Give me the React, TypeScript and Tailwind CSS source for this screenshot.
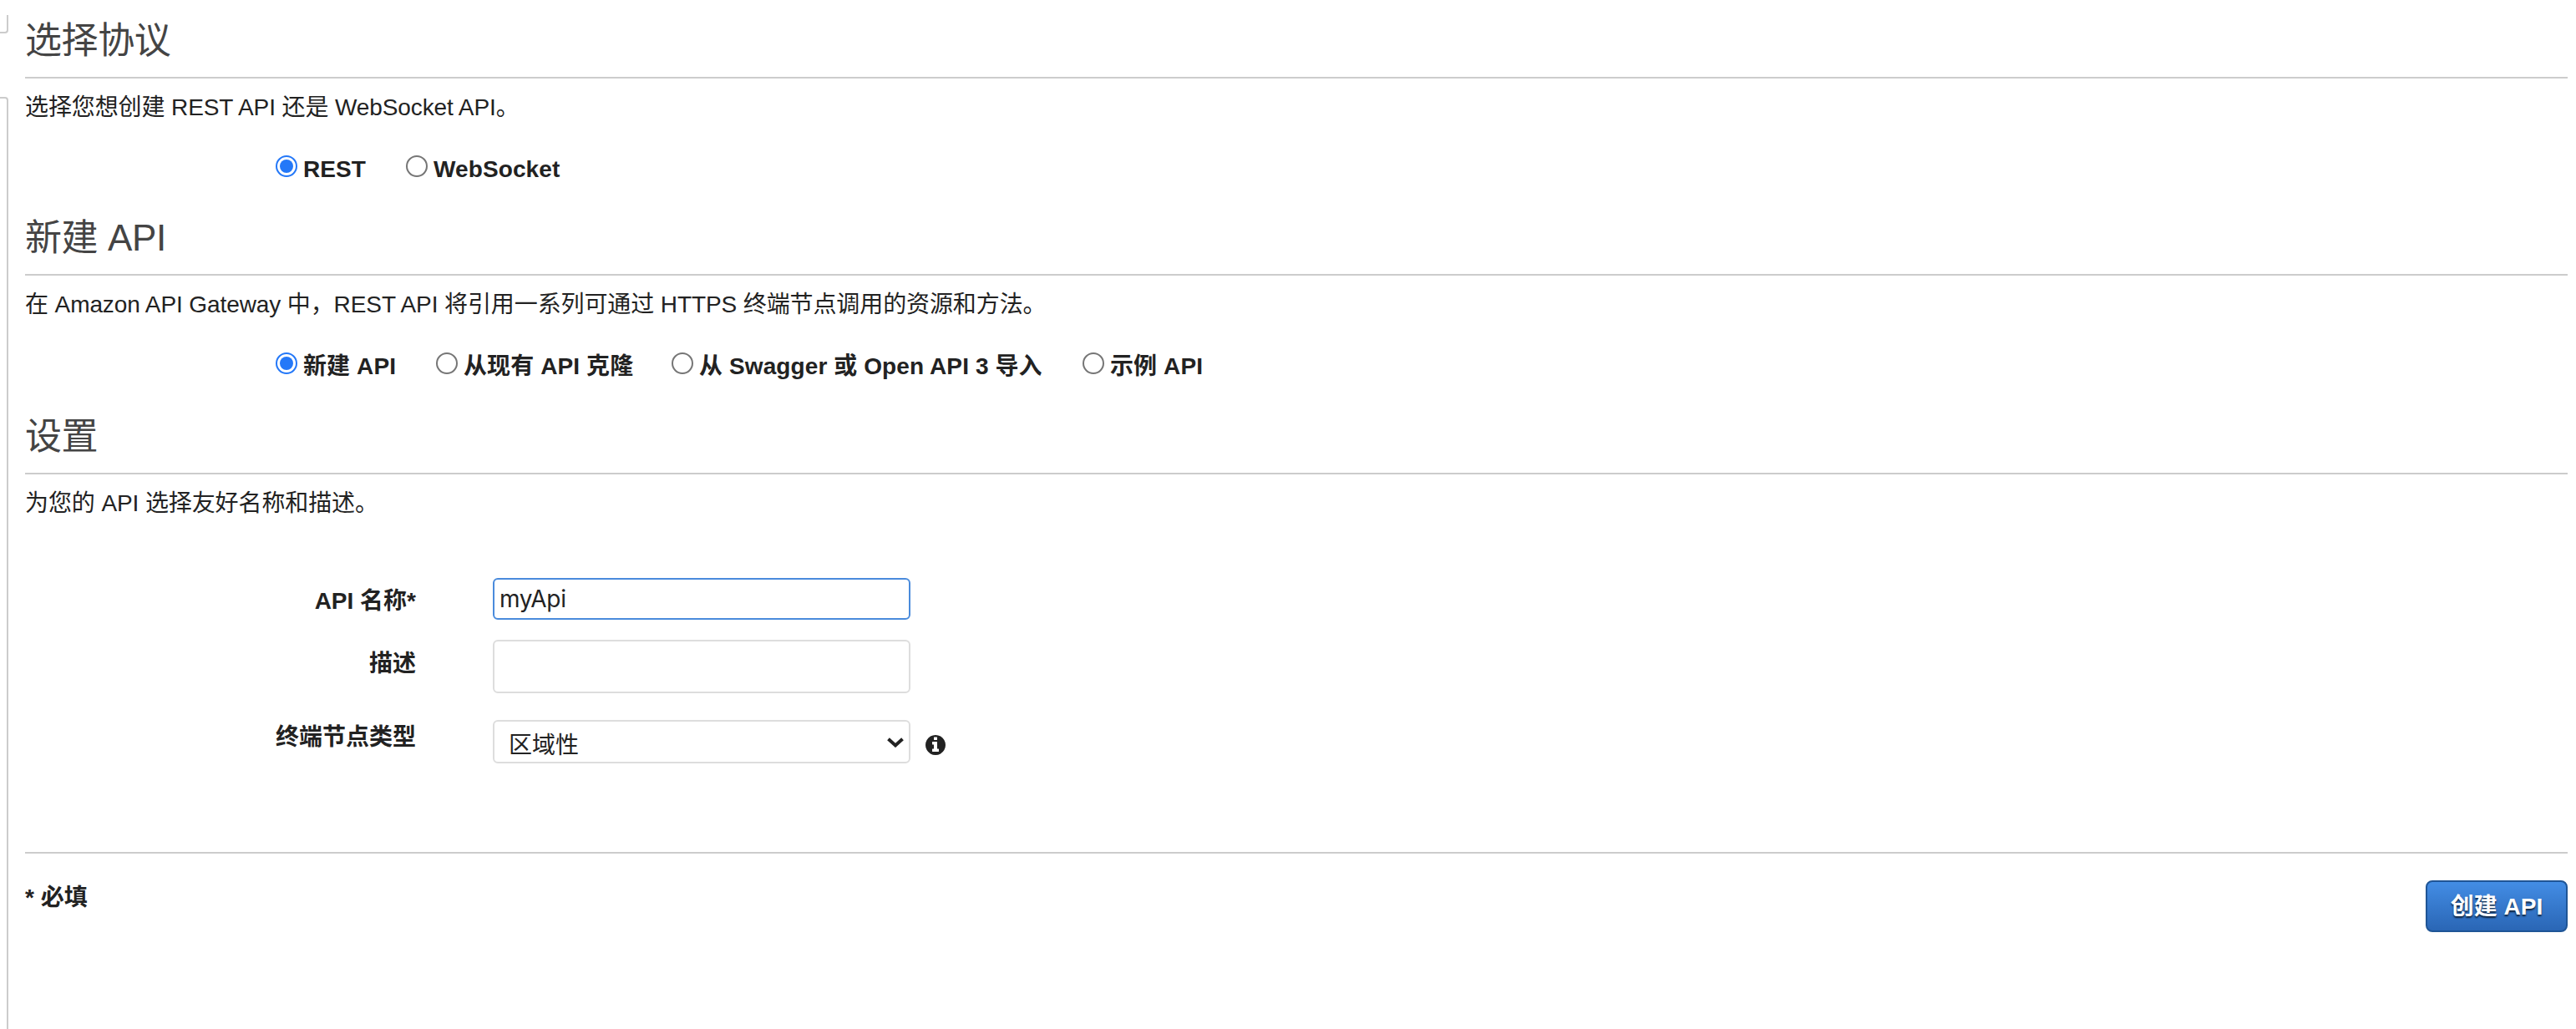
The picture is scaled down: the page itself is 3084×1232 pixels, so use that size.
import { useState } from "react";
import type { ReactNode } from "react";

type RadioProps = { label: string; checked: boolean; width: string; onSelect: () => void };

function Radio({ label, checked, width, onSelect }: RadioProps) {
  return (
    <label className={`flex shrink-0 whitespace-nowrap font-bold tracking-[0.1px] ${width}`}>
      <input type="radio" checked={checked} onChange={onSelect} className="sr-only" />
      <span
        className={`mt-[3px] mr-[7px] flex size-[26px] shrink-0 items-center justify-center rounded-full border-2 bg-white ${
          checked ? "border-[#2478f8]" : "border-[#767676]"
        }`}
      >
        {checked && <span className="size-4 rounded-full bg-[#2478f8]" />}
      </span>
      {label}
    </label>
  );
}

function InfoIcon({ className }: { className: string }) {
  return (
    <svg viewBox="128 128 1536 1536" className={className} fill="currentColor">
      <path d="M1152 1376v-160q0-14-9-23t-23-9h-96v-512q0-14-9-23t-23-9h-320q-14 0-23 9t-9 23v160q0 14 9 23t23 9h96v320h-96q-14 0-23 9t-9 23v160q0 14 9 23t23 9h448q14 0 23-9t9-23zm-128-896v-160q0-14-9-23t-23-9h-192q-14 0-23 9t-9 23v160q0 14 9 23t23 9h192q14 0 23-9t9-23zm640 416q0 209-103 385.5t-279.5 279.5-385.5 103-385.5-103-279.5-279.5-103-385.5 103-385.5 279.5-279.5 385.5-103 385.5 103 279.5 279.5 103 385.5z" />
    </svg>
  );
}

function Section({ title, intro, className, children }: { title: string; intro: string; className: string; children: ReactNode }) {
  return (
    <section className={className}>
      <h2 className="border-b-2 border-[#ccc] pb-[11px] text-[44px] leading-[64px] tracking-[-0.4px] text-[#444]">{title}</h2>
      <p className="mt-[15px] tracking-[-0.1px]">{intro}</p>
      {children}
    </section>
  );
}

function Field({ label, labelClass, className, children }: { label: string; labelClass: string; className: string; children: ReactNode }) {
  return (
    <div className={`flex items-start ${className}`}>
      <span className={`mr-[92px] w-[468px] text-right font-bold ${labelClass}`}>{label}</span>
      {children}
    </div>
  );
}

const PROTOCOLS = [
  { label: "REST", width: "w-[156px]" },
  { label: "WebSocket", width: "w-auto" },
];

const SOURCES = [
  { label: "新建 API", width: "w-[192px]" },
  { label: "从现有 API 克隆", width: "w-[282px]" },
  { label: "从 Swagger 或 Open API 3 导入", width: "w-[492px]" },
  { label: "示例 API", width: "w-auto" },
];

export default function App() {
  const [protocol, setProtocol] = useState("REST");
  const [source, setSource] = useState("新建 API");
  return (
    <div className="flex h-[1232px] w-[3084px] overflow-hidden bg-white font-['Liberation_Sans','Noto_Sans_CJK_SC',sans-serif] text-[28px] leading-[40px] text-[#222]">
      <aside className="flex w-[10px] shrink-0 flex-col pt-[18px]">
        <div className="h-[22px] rounded-br-[4px] border-r-2 border-b-2 border-[#ccc]" />
        <div className="mt-[76px] flex-1 rounded-tr-[4px] border-t-2 border-r-2 border-[#ccc]" />
      </aside>
      <main className="flex-1 pt-[17px] pr-[10px] pl-5">
        <Section title="选择协议" intro="选择您想创建 REST API 还是 WebSocket API。" className="">
          <div className="mt-[34px] flex pl-[300px]">
            {PROTOCOLS.map((p) => (
              <Radio key={p.label} {...p} checked={protocol === p.label} onSelect={() => setProtocol(p.label)} />
            ))}
          </div>
        </Section>
        <Section
          title="新建 API"
          intro="在 Amazon API Gateway 中，REST API 将引用一系列可通过 HTTPS 终端节点调用的资源和方法。"
          className="mt-[30px]"
        >
          <div className="mt-[34px] flex pl-[300px]">
            {SOURCES.map((s) => (
              <Radio key={s.label} {...s} checked={source === s.label} onSelect={() => setSource(s.label)} />
            ))}
          </div>
        </Section>
        <Section title="设置" intro="为您的 API 选择友好名称和描述。" className="mt-[32px]">
          <Field label="API 名称*" labelClass="mt-[8px]" className="mt-[69px]">
            <input
              defaultValue="myApi"
              className="h-[50px] w-[500px] rounded-[6px] border-2 border-[#4a8bdc] px-[6px] pb-px font-['Inter',sans-serif] text-[28px] tracking-[-0.3px] outline-none"
            />
          </Field>
          <Field label="描述" labelClass="mt-[9px]" className="mt-6">
            <textarea className="h-16 w-[500px] resize-none rounded-[6px] border-2 border-[#ddd]" />
          </Field>
          <Field label="终端节点类型" labelClass="mt-px" className="mt-8">
            <div className="flex h-[52px] w-[500px] justify-between rounded-[6px] border-2 border-[#ddd] pt-[9px] pr-[6px] pl-[17px]">
              <span>区域性</span>
              <svg viewBox="0 0 20 12" className="mt-[10px] h-3 w-5" fill="none" stroke="#222" strokeWidth="4">
                <path d="M1.5 1.7 10 9.4 18.5 1.7" />
              </svg>
            </div>
            <InfoIcon className="mt-[18px] ml-[18px] size-6" />
          </Field>
        </Section>
        <footer className="mt-[106px] flex items-start justify-between border-t-2 border-[#ccc] font-bold">
          <p className="mt-[33px]">* 必填</p>
          <button className="mt-8 h-[62px] w-[170px] rounded-[8px] border-2 border-[#1f5596] bg-linear-to-b from-[#438de5] to-[#2a66b5] pt-0.5 leading-[40px] text-white [text-shadow:0_2px_2px_rgba(0,0,0,0.7)]">
            创建 API
          </button>
        </footer>
      </main>
    </div>
  );
}
